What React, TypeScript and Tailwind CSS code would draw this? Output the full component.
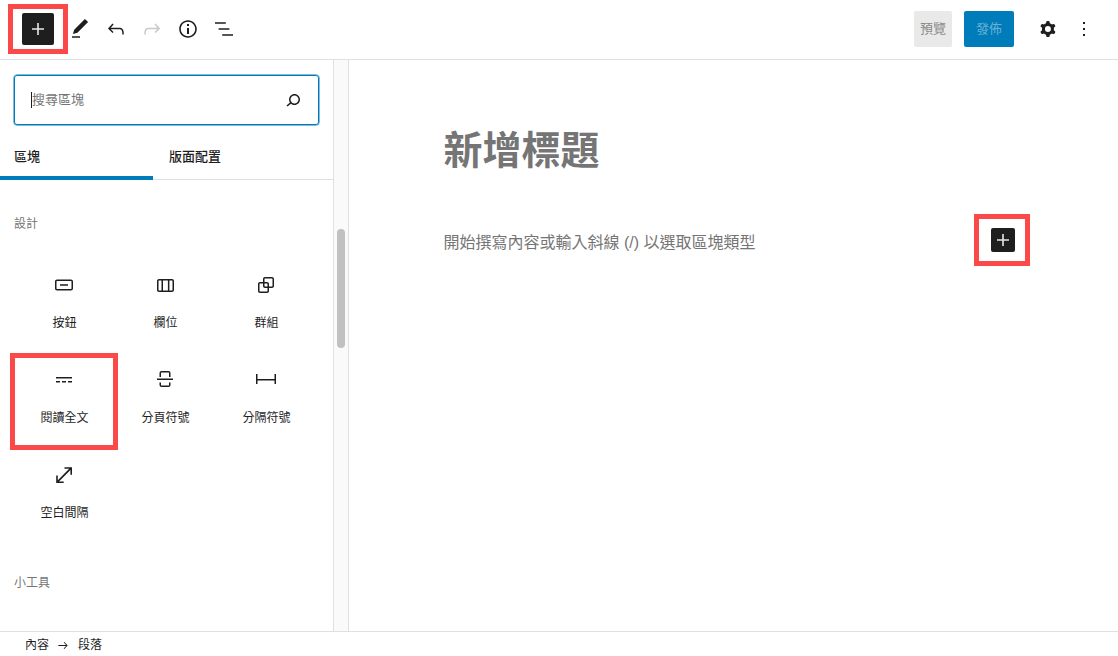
import type { ReactNode } from "react";

const PLUS = "M18 11.2h-5.2V6h-1.6v5.2H6v1.6h5.2V18h1.6v-5.2H18z";

const toolbarIcons = [
  { d: "M20.1 5.1L16.9 2 6.2 12.7l-1.3 4.4 4.5-1.3L20.1 5.1zM4 20.8h8v-1.5H4v1.5z", color: "text-[#1e1e1e]" },
  { d: "M18.3 11.7c-.6-.6-1.4-.9-2.3-.9H6.7l2.9-3.3-1.1-1-4.5 5L8.5 16l1-1-2.7-2.7H16c.5 0 .9.2 1.3.5 1 1 1 3.4 1 4.5v.3h1.5v-.2c0-1.5 0-4.3-1.5-5.7z", color: "text-[#1e1e1e]" },
  { d: "M15.6 6.5l-1.1 1 2.9 3.3H8c-.9 0-1.7.3-2.3.9-1.4 1.5-1.4 4.2-1.4 5.6v.2h1.5v-.3c0-1.1 0-3.5 1-4.5.3-.3.7-.5 1.3-.5h9.2L14.5 15l1.1 1.1 4.6-4.6-4.6-5z", color: "text-[#c8c8c8]" },
  { d: "M12 3.2c-4.8 0-8.8 3.9-8.8 8.8 0 4.8 3.9 8.8 8.8 8.8 4.8 0 8.8-3.9 8.8-8.8 0-4.8-4-8.8-8.8-8.8zm0 16c-4 0-7.2-3.3-7.2-7.2C4.8 8 8 4.8 12 4.8s7.2 3.3 7.2 7.2c0 4-3.2 7.2-7.2 7.2zM11 17h2v-6h-2v6zm0-8h2V7h-2v2z", color: "text-[#1e1e1e]" },
  { d: "M13.8 5.2H3v1.5h10.8V5.2zm-3.6 12v1.5H21v-1.5H10.2zm7.2-6H6.6v1.5h10.8v-1.5z", color: "text-[#1e1e1e]" },
];

const blocks = [
  { label: "按鈕", d: "M19 6.5H5c-1.1 0-2 .9-2 2v7c0 1.1.9 2 2 2h14c1.1 0 2-.9 2-2v-7c0-1.1-.9-2-2-2zm.5 9c0 .3-.2.5-.5.5H5c-.3 0-.5-.2-.5-.5v-7c0-.3.2-.5.5-.5h14c.3 0 .5.2.5.5v7zM8 12.8h8v-1.5H8v1.5z" },
  { label: "欄位", d: "M19 6H6c-1.1 0-2 .9-2 2v9c0 1.1.9 2 2 2h13c1.1 0 2-.9 2-2V8c0-1.1-.9-2-2-2zm-4.1 1.5v10H10v-10h4.9zM5.5 17V8c0-.3.2-.5.5-.5h2.5v10H6c-.3 0-.5-.2-.5-.5zm14 0c0 .3-.2.5-.5.5h-2.6v-10H19c.3 0 .5.2.5.5v9z" },
  { label: "群組", d: "M18 4h-7c-1.1 0-2 .9-2 2v3H6c-1.1 0-2 .9-2 2v7c0 1.1.9 2 2 2h7c1.1 0 2-.9 2-2v-3h3c1.1 0 2-.9 2-2V6c0-1.1-.9-2-2-2zm-4.5 14c0 .3-.2.5-.5.5H6c-.3 0-.5-.2-.5-.5v-7c0-.3.2-.5.5-.5h3V13c0 1.1.9 2 2 2h2.5v3zm0-4.5H11c-.3 0-.5-.2-.5-.5v-2.5H13c.3 0 .5.2.5.5v2.5zm5-.5c0 .3-.2.5-.5.5h-3V11c0-1.1-.9-2-2-2h-2.5V6c0-.3.2-.5.5-.5h7c.3 0 .5.2.5.5v7z" },
  { label: "閱讀全文", d: "M4 9v1.5h16V9H4zm12 5.5h4V13h-4v1.5zm-6 0h4V13h-4v1.5zm-6 0h4V13H4v1.5z", marked: true },
  { label: "分頁符號", d: "M17.5 9V5a2 2 0 0 0-2-2h-7a2 2 0 0 0-2 2v4H8V5a.5.5 0 0 1 .5-.5h7a.5.5 0 0 1 .5.5v4h1.5Zm0 5.5V17a2 2 0 0 1-2 2h-7a2 2 0 0 1-2-2v-2.5H8V17a.5.5 0 0 0 .5.5h7a.5.5 0 0 0 .5-.5v-2.5h1.5ZM4 12h16v-1.5H4V12Z" },
  { label: "分隔符號", d: "M22 6v10h-1.5v-3.5h-17V16H2V6h1.5v5h17V6H22z" },
  { label: "空白間隔", d: "M12.5 4.2v1.6h4.7L5.8 17.2V12.5H4.2V20h7.5v-1.6H7l11.4-11.4v4.8h1.6V4.2h-7.5z" },
];

function Icon({ d, className }: { d: string; className?: string }) {
  return (
    <svg viewBox="0 0 24 24" width={24} height={24} fill="currentColor" className={className}>
      <path d={d} />
    </svg>
  );
}

function RedFrame({ className, children }: { className: string; children?: ReactNode }) {
  return <div className={`flex items-center justify-center border-[5px] border-[#fb4848] ${className}`}>{children}</div>;
}

function InserterButton({ className }: { className: string }) {
  return (
    <div className={`flex items-center justify-center rounded-[2px] bg-[#1e1e1e] text-[#e8e8e8] ${className}`}>
      <Icon d={PLUS} />
    </div>
  );
}

function Header() {
  return (
    <header className="flex h-[60px] shrink-0 items-center border-b border-[#e0e0e0] pb-px pl-2 pr-[16px]">
      <RedFrame className="h-[50px] w-[60px]">
        <InserterButton className="h-8 w-8" />
      </RedFrame>
      <div className="ml-[-6px] flex">
        {toolbarIcons.map((icon) => (
          <div key={icon.d} className={`flex h-9 w-9 items-center justify-center ${icon.color}`}>
            <Icon d={icon.d} />
          </div>
        ))}
      </div>
      <div className="ml-auto flex items-center">
        <div className="flex h-9 w-[38px] items-center justify-center rounded-[2px] bg-[#e9e9e9] text-[13px] text-[#8a8a8a]">預覽</div>
        <div className="ml-3 flex h-9 w-[50px] items-center justify-center rounded-[2px] bg-[#007cba] text-[13px] text-[#66b0d6]">發佈</div>
        <div className="ml-[16px] flex h-9 w-9 items-center justify-center text-[#1e1e1e]">
          <svg viewBox="0 0 24 24" width={24} height={24} fill="currentColor">
            <path fillRule="evenodd" clipRule="evenodd" d="M10.289 4.836A1 1 0 0111.275 4h1.306a1 1 0 01.987.836l.244 1.466c.787.26 1.503.679 2.108 1.218l1.393-.522a1 1 0 011.216.437l.653 1.13a1 1 0 01-.23 1.273l-1.148.944a6.025 6.025 0 010 2.435l1.149.946a1 1 0 01.23 1.272l-.653 1.13a1 1 0 01-1.216.437l-1.394-.522c-.605.54-1.32.958-2.108 1.218l-.244 1.466a1 1 0 01-.987.836h-1.306a1 1 0 01-.986-.836l-.244-1.466a5.995 5.995 0 01-2.108-1.218l-1.394.522a1 1 0 01-1.217-.436l-.653-1.131a1 1 0 01.23-1.272l1.149-.946a6.026 6.026 0 010-2.435l-1.148-.944a1 1 0 01-.23-1.272l.653-1.131a1 1 0 011.217-.437l1.393.522a5.994 5.994 0 012.108-1.218l.244-1.466zM14.929 12a3 3 0 11-6 0 3 3 0 016 0z" />
          </svg>
        </div>
        <div className="flex h-9 w-9 items-center justify-center text-[#1e1e1e]">
          <Icon d="M13 19h-2v-2h2v2zm0-6h-2v-2h2v2zm0-6h-2V5h2v2z" />
        </div>
      </div>
    </header>
  );
}

function Sidebar() {
  return (
    <aside className="flex w-[334px] shrink-0 flex-col border-r border-[#e0e0e0]">
      <div className="px-[14px] pt-[15px]">
        <div className="flex h-[50px] items-center rounded-[3px] border border-[#007cba] pl-4 pr-[13px] shadow-[0_0_0_0.5px_#007cba]">
          <div className="h-[16px] w-px bg-[#1e1e1e]" />
          <span className="text-[13px] text-[#757575]">搜尋區塊</span>
          <Icon d="M13.5 6C10.5 6 8 8.5 8 11.5c0 1.1.3 2.1.9 3l-3.4 3 1 1.1 3.4-2.9c1 .9 2.2 1.4 3.6 1.4 3 0 5.5-2.5 5.5-5.5C19 8.5 16.5 6 13.5 6zm0 9.5c-2.2 0-4-1.8-4-4s1.8-4 4-4 4 1.8 4 4-1.8 4-4 4z" className="ml-auto text-[#1e1e1e]" />
        </div>
      </div>
      <div className="mt-[10px] flex h-[45px] border-b border-[#e0e0e0] text-[13px] font-medium text-[#1e1e1e]">
        <div className="mb-[-1px] flex w-[153px] items-center border-b-4 border-[#007cba] pl-[14px] pt-[3px]">區塊</div>
        <div className="flex items-center pl-4">版面配置</div>
      </div>
      <div className="mt-[35px] px-[14px] text-[12px] leading-[18px] text-[#757575]">設計</div>
      <div className="mt-[26px] grid grid-cols-[101px_101px_101px] px-[14px]">
        {blocks.map((block) => (
          <div key={block.label} className="relative flex h-[95px] flex-col items-center pt-[14px] text-[#1e1e1e]">
            {block.marked && <RedFrame className="absolute left-[-4px] right-[-3px] top-[-1px] bottom-[-1px]" />}
            <Icon d={block.d} className="mr-px" />
            <span className="mt-[17px] text-[12px] leading-[18px]">{block.label}</span>
          </div>
        ))}
      </div>
      <div className="mt-[30px] px-[14px] text-[12px] leading-[18px] text-[#757575]">小工具</div>
    </aside>
  );
}

function Scrollbar() {
  return (
    <div className="w-[15px] shrink-0 border-r border-[#e0e0e0] bg-[#fafafa] pl-[3px] pt-[169px]">
      <div className="h-[119px] w-2 rounded-full bg-[#c1c1c1]" />
    </div>
  );
}

function Editor() {
  return (
    <main className="flex min-w-0 flex-1 justify-center">
      <div className="w-[580px] shrink-0">
        <h1 className="mt-[60px] text-[39px] font-bold leading-[60px] text-[#757575]">新增標題</h1>
        <div className="relative mt-[51px] flex items-center font-['Liberation_Sans','Noto_Sans_CJK_TC',sans-serif] text-[16px] leading-6 text-[#757575]">
          <span>開始撰寫內容或輸入斜線 (/) 以選取區塊類型</span>
          <RedFrame className="absolute right-[-6px] top-[-17px] h-[52px] w-[56px] pl-[2px]">
            <InserterButton className="h-6 w-6" />
          </RedFrame>
        </div>
      </div>
    </main>
  );
}

export default function App() {
  return (
    <div className="flex h-screen flex-col overflow-hidden bg-white font-['Inter','Noto_Sans_CJK_TC',sans-serif] text-[#1e1e1e]">
      <Header />
      <div className="flex min-h-0 flex-1 overflow-hidden">
        <Sidebar />
        <Scrollbar />
        <Editor />
      </div>
      <footer className="flex h-[25px] shrink-0 items-center border-t border-[#e0e0e0] pl-[25px] pt-px text-[12px] text-[#1e1e1e]">
        <span>內容</span>
        <svg viewBox="0 0 24 24" width={14} height={14} fill="currentColor" className="ml-[7px] mr-2">
          <path d="M14.3 6.7l-1.1 1.1 4 4.2H4v1.5h13.2l-4.1 4.3 1.1 1.1 5.8-6.2z" />
        </svg>
        <span>段落</span>
      </footer>
    </div>
  );
}
